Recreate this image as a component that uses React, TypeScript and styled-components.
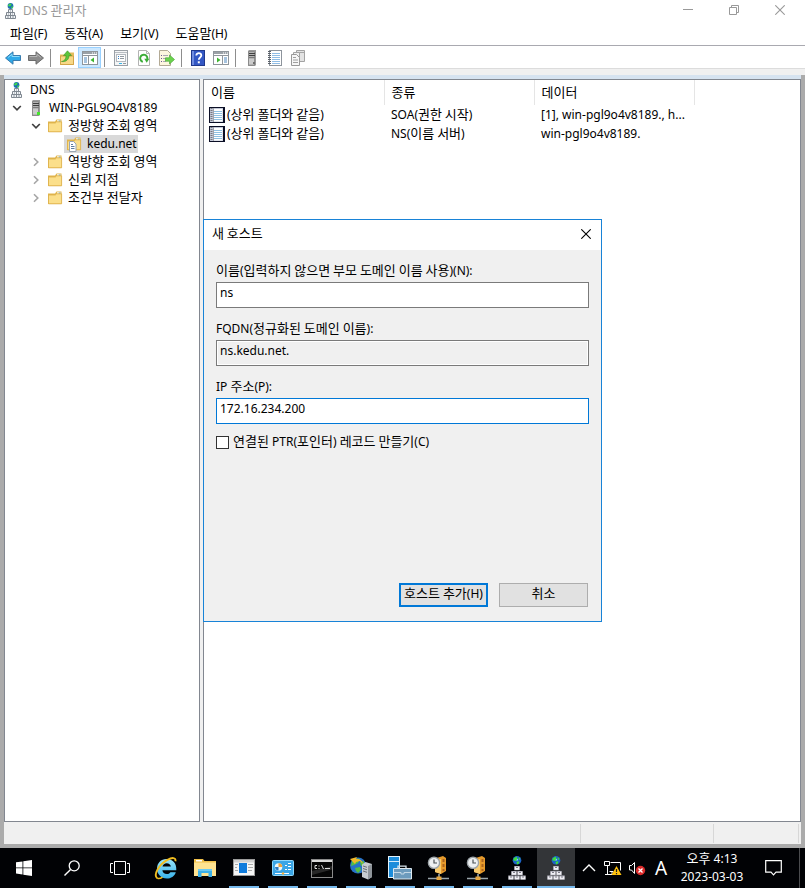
import React, { useState } from "react";
import styled, { createGlobalStyle, css } from "styled-components";

const GlobalStyle = createGlobalStyle`
  *, *::before, *::after { box-sizing: border-box; }
  body { margin: 0; background: #ababab; }
  body, button, input, table {
    font-family: "Noto Sans", "Noto Sans CJK KR", sans-serif;
    font-size: 12px;
    line-height: 18px;
    color: #000;
  }
  svg { display: block; flex: none; }
`;

/* ---------- text ---------- */

const Hangul = styled.span`
  font-family: "Noto Sans CJK KR", sans-serif;
  font-size: 13px;
  line-height: 1;
`;

const KOREAN_RUN = /([\uac00-\ud7a3]+(?: +[\uac00-\ud7a3]+)*)/;

function Text({ children }: { children: string }) {
  return (
    <>
      {children.split(KOREAN_RUN).map((part, i) =>
        i % 2 ? <Hangul key={i}>{part}</Hangul> : part
      )}
    </>
  );
}

/* ---------- icons ---------- */

const DnsIcon = () => (
  <svg width="12" height="16" viewBox="0 0 12 16">
    <circle cx="5.500" cy="3" r="2.900" fill="#1c6fb4" />
    <path d="M3.500 1.600 5.800.4l.8 1.400L5 3.400 3 3ZM6.300 3.800l2-.6-.7 2-1.300.4Z" fill="#3fd64a" />
    <path d="M3.500 6.500h4v3h-4ZM1.500 9.500h4v3h-4ZM5.500 9.500h4v3h-4ZM.5 12.500h5v3h-5ZM5.500 12.500h5v3h-5Z" fill="#f1f4f7" stroke="#808891" />
    <path d="M5 8h1M3 11h1M7 11h1M2 14h2M7 14h2" stroke="#8d959e" />
  </svg>
);

const DnsTaskIcon = () => {
  const blocks = [[6, 10], [3, 15], [9, 15], [0, 19.5], [6, 19.5], [12, 19.5]];
  return (
    <svg width="18" height="24" viewBox="0 0 18 24">
      <circle cx="9" cy="4.300" r="4.300" fill="#1b63c8" />
      <path d="M5.500 2.500 8.500.4l1 2L8 5 5.500 4.500ZM10.500 1.200l2 1.600-1.500 1.500ZM8.500 5.800l2.800-.6-.3 2.300-2 .9Z" fill="#3edc3c" />
      <path d="M9 2.500 10.500 4 8.500 5Z" fill="#8be3ff" />
      {blocks.map(([x, y]) => (
        <g key={`${x}-${y}`}>
          <rect x={x + 0.3} y={y} width="5.400" height="4.200" fill="#b9b9c4" />
          <rect x={x + 0.8} y={y + 1} width="4.400" height="2.700" fill="#f0f0f5" />
          <rect x={x + 2} y={y + 1} width="2" height="1" fill="#7d7d88" />
        </g>
      ))}
    </svg>
  );
};

const ServerIcon = ({ led = true }: { led?: boolean }) => (
  <svg width="16" height="16" viewBox="0 0 16 16">
    <path d="M5 0h7v15l-1 1H4V1Z" fill="#9a9a9a" />
    <path d="M4.500 1.500h6v14h-6Z" fill="#b4b4b4" stroke="#8b8b8b" />
    <path d="M5 3.500h6M5 5.500h6" stroke="#3f3f3f" />
    <path d="M5 7.500h6" stroke="#7a7a7a" />
    <path d="M5 9h5v5H5Z" fill="#cbcbcb" />
    {led ? (
      <rect x="9" y="12" width="3" height="3" fill="#45e52c" />
    ) : (
      <rect x="9" y="12" width="2" height="2" fill="#6f6f6f" />
    )}
  </svg>
);

const FolderIcon = ({ sheet = false }: { sheet?: boolean }) => (
  <svg width="16" height="16" viewBox="0 0 16 16">
    <path d="M1 3.500h7l1.500-2h5v12.500H1Z" fill="#e2b64c" />
    <path d="M10 2.300h3.600v1.500H10Z" fill="#fff" />
    <path d="M11.800 2.600h1.600v1h-1.600Z" fill="#3c9bd6" />
    <path d="M1.500 5h6.800l1.300-1.200h5v10H1.500Z" fill="#fbdf8b" stroke="#dcae49" strokeWidth=".8" />
    {sheet && (
      <>
        <path d="M3.500 5.500h4l2.500 2.500v7.500H3.500Z" fill="#fff" stroke="#9aa6b3" />
        <path d="M5 8.500h2M5 10.500h3.500M5 12.500h3.500" stroke="#5f7c9f" />
      </>
    )}
  </svg>
);

const ArrowIcon = ({ forward = false }: { forward?: boolean }) => (
  <svg width="18" height="16" viewBox="0 0 18 16">
    {forward ? (
      <>
        <path d="M1.500 5.500H9V1.800L16.500 8 9 14.200v-3.700H1.500Z" fill="#8b8b8b" stroke="#6b6b6b" />
        <path d="M2.500 6.500H10V4.200L13.800 7.400" fill="none" stroke="#b5b5b5" />
      </>
    ) : (
      <>
        <path d="M16.500 5.500H9V1.800L1.500 8 9 14.200v-3.700h7.500Z" fill="#2fa9e8" stroke="#3a7cae" />
        <path d="M15.500 6.500H8V4.200L4.200 7.400" fill="none" stroke="#8edbfa" />
      </>
    )}
  </svg>
);

const FolderUpIcon = () => (
  <svg width="16" height="16" viewBox="0 0 16 16">
    <path d="M1 4.500h8l1.500-2h4.500v12.500H1Z" fill="#e5bd5d" />
    <path d="M1.500 6h13v8.500h-13Z" fill="#f7d887" stroke="#d3a447" />
    <path d="M2.500 11.500C6 10.800 7 8.500 7 5.500H4.500L8.500.8l4 4.700H10c0 4-2.800 6.600-7.500 6Z" fill="#5cc53b" stroke="#3b9427" strokeWidth=".6" />
  </svg>
);

const PaneIcon = ({ right = false }: { right?: boolean }) => (
  <svg width="16" height="16" viewBox="0 0 16 16">
    <rect x=".5" y="1.500" width="15" height="13" fill="#fff" stroke="#8f959b" />
    <path d="M1 2h14v2H1Z" fill="#9ba1a7" />
    <path d="M10 3h1M12 3h1M14 3h1" stroke="#fff" />
    <path d="M1 5.500h14" stroke="#8f959b" />
    {right ? (
      <>
        <path d="M9.500 6v8.500" stroke="#8f959b" />
        <path d="M4 7.500v5L7.500 10Z" fill="#3db52f" />
        <path d="M11 8h3M11 10h3M11 12h3" stroke="#4d86bd" />
      </>
    ) : (
      <>
        <path d="M6.500 6v8.500" stroke="#8f959b" />
        <path d="M12 7.500v5L8.500 10Z" fill="#3db52f" />
        <path d="M2 8h3M2 10h3M2 12h3" stroke="#4d86bd" />
      </>
    )}
  </svg>
);

const PropertiesIcon = () => (
  <svg width="16" height="16" viewBox="0 0 16 16">
    <rect x="1.500" y=".5" width="13" height="15" fill="#f5f6f7" stroke="#9aa0a6" />
    <path d="M2 2.500h12" stroke="#b8bdc2" />
    <rect x="3.500" y="4.500" width="9" height="7" fill="#fff" stroke="#b3b9bf" />
    <path d="M5 6.500h1M5 8.500h1" stroke="#2f7cc4" />
    <path d="M7 6.500h4M7 8.500h4" stroke="#9098a0" />
    <path d="M6 13.500h3" stroke="#35b3e6" />
    <path d="M10 13.500h3" stroke="#9098a0" />
  </svg>
);

const RefreshIcon = () => (
  <svg width="16" height="16" viewBox="0 0 16 16">
    <path d="M2.500.5h8L13.500 3.500v12h-11Z" fill="#fff" stroke="#b3b3b3" />
    <path d="M10.500.5v3h3" fill="none" stroke="#b3b3b3" />
    <path d="M6.800 11.800A3.600 3.600 0 1 1 11.200 9.500" fill="none" stroke="#3cad38" strokeWidth="1.900" />
    <path d="M8.300 8.800h5l-2.600 3.900Z" fill="#3cad38" />
  </svg>
);

const ExportIcon = () => (
  <svg width="16" height="16" viewBox="0 0 16 16">
    <path d="M.5.5h8L11.500 3.500v12H.5Z" fill="#fdf6df" stroke="#b3aa95" />
    <path d="M2 5.500h1M2 8.500h1M2 11.500h1" stroke="#6a5c93" />
    <path d="M4 5.500h5M4 8.500h3M4 11.500h3" stroke="#aaa6b3" />
    <path d="M6.500 7.800h4V5l5 4.500-5 4.500v-2.800h-4Z" fill="#6bd34d" stroke="#4faa3d" strokeWidth=".7" />
  </svg>
);

const HelpIcon = () => (
  <svg width="16" height="16" viewBox="0 0 16 16">
    <rect x="1.500" y=".5" width="13" height="15" fill="#3357c4" stroke="#20388c" />
    <path d="M2 1h2v14H2Z" fill="#6f8ce0" />
    <path d="M6.300 5.500c0-3.200 5.200-3 5 0 0 2-2.500 2-2.500 4.200" fill="none" stroke="#fff" strokeWidth="1.800" />
    <rect x="7.800" y="11.300" width="2" height="2" fill="#fff" />
  </svg>
);

const NotebookIcon = () => (
  <svg width="16" height="16" viewBox="0 0 16 16">
    <rect x="2.500" y=".5" width="12" height="15" fill="#fff" stroke="#8d949c" />
    <path d="M5 3.500h8M5 5.500h8M5 7.500h8M5 9.500h8M5 11.500h8M5 13.500h8" stroke="#8fbde6" />
    <path d="M2.500 1v14" stroke="#5a6068" strokeWidth="3" strokeDasharray="1 1" />
  </svg>
);

const RecordIcon = () => (
  <svg width="16" height="16" viewBox="0 0 16 16">
    <rect width="16" height="16" fill="#0b0f26" />
    <path d="M1 1h13v14H1Z" fill="#c3c9d8" />
    <path d="M5 2h8.500v12.500H5Z" fill="#fff" />
    <path d="M5 4.500h8M5 6.500h8M5 8.500h8M5 10.500h8M5 12.500h8" stroke="#8fc0e2" />
    <path d="M2.500 1v14" stroke="#77767c" strokeWidth="2" strokeDasharray="1 1" />
    <path d="M4.500 1v14" stroke="#a2a4ad" />
  </svg>
);

const CopiesIcon = () => (
  <svg width="16" height="16" viewBox="0 0 16 16">
    <path d="M6.500.5h8v11h-8Z" fill="#e3e3e3" stroke="#a3a3a3" />
    <path d="M7 2.500h7" stroke="#a5a5a5" />
    <path d="M3.500 2.500h6v10h-6Z" fill="#f0f0f0" stroke="#a3a3a3" />
    <path d="M1.500 4.500h5l3 3v8h-8Z" fill="#f7f7f7" stroke="#999" />
    <path d="M3 7.500h3M3 10h5M3 12.500h5" stroke="#a0a0a0" />
  </svg>
);

const ChevronIcon = ({ open }: { open: boolean }) => (
  <svg width="10" height="10" viewBox="0 0 10 10">
    {open ? (
      <path d="m1.200 3 3.800 3.800L8.800 3" fill="none" stroke="#404040" strokeWidth="1.700" />
    ) : (
      <path d="m3 1.200 3.800 3.800L3 8.800" fill="none" stroke="#a6a6a6" strokeWidth="1.600" />
    )}
  </svg>
);

const MinimizeIcon = () => (
  <svg width="10" height="10" viewBox="0 0 10 10"><path d="M0 4.500h10" stroke="#999" /></svg>
);
const RestoreIcon = () => (
  <svg width="10" height="10" viewBox="0 0 10 10">
    <path d="M.5 2.500h7v7h-7ZM2.500 2.500v-2h7v7h-2" fill="none" stroke="#999" />
  </svg>
);
const CloseIcon = ({ color = "#999" }: { color?: string }) => (
  <svg width="10" height="10" viewBox="0 0 10 10">
    <path d="m.3.3 9.400 9.400m0-9.400L.3 9.700" stroke={color} strokeWidth="1.100" />
  </svg>
);

/* taskbar icons */

const StartIcon = () => (
  <svg width="16" height="16" viewBox="0 0 16 16">
    <path d="M0 2.300 6.500 1.400v6.100H0ZM7.300 1.300 16 0v7.500H7.300ZM0 8.300h6.500v6.200L0 13.600ZM7.300 8.300H16V16l-8.700-1.300Z" fill="#fff" />
  </svg>
);
const SearchIcon = () => (
  <svg width="16" height="16" viewBox="0 0 16 16">
    <circle cx="10.200" cy="5.800" r="5" fill="none" stroke="#fff" strokeWidth="1.300" />
    <path d="M6.600 9.400.5 15.500" stroke="#fff" strokeWidth="1.400" />
  </svg>
);
const TaskViewIcon = () => (
  <svg width="20" height="14" viewBox="0 0 20 14">
    <path d="M4.500.5h11v13h-11ZM3 2.500H.5v9H3M17 2.500h2.500v9H17" fill="none" stroke="#fff" />
  </svg>
);
const ExplorerEIcon = () => (
  <svg width="24" height="24" viewBox="0 0 24 24">
    <defs>
      <linearGradient id="ieBlue" x1="0" y1="0" x2="0" y2="1">
        <stop offset="0" stopColor="#9be6fb" />
        <stop offset="1" stopColor="#38b2ea" />
      </linearGradient>
    </defs>
    <path d="M12.500 3C7 3 3 7.200 3 12.600 3 18.200 7 22.500 12.700 22.500c4.300 0 7.800-2.300 9.100-6.300h-5.400c-.8 1.300-2 1.800-3.500 1.800-2.600 0-4.300-1.400-4.500-3.800H22.300C22.800 7.300 18.600 3 12.500 3ZM8.500 10.600C8.900 8.600 10.500 7.200 12.700 7.200s3.900 1.300 4.200 3.400Z" fill="url(#ieBlue)" />
    <path d="M3.300 22.200C-1.200 19 5.300 8.200 13 4.100c5-2.800 9.200-3 8.400 1.200" fill="none" stroke="#f1bd20" strokeWidth="1.900" />
    <path d="M3.300 22.200c1.300.8 3.400.2 5.200-1" fill="none" stroke="#f1bd20" strokeWidth="1.500" />
  </svg>
);
const FilesIcon = () => (
  <svg width="22" height="20" viewBox="0 0 22 20">
    <path d="M0 1h9l1.500 2H22v15H0Z" fill="#f0c04a" />
    <path d="M2 2h6v1.500H2Z" fill="#fff" />
    <path d="M0 4.500h22V18H0Z" fill="#ffe391" />
    <path d="M4 19v-8h14v8h-3.500v-4h-7v4Z" fill="#3bb0e8" />
    <path d="M4 11h14v2H4Z" fill="#6ccaf2" />
  </svg>
);
const RunWindowIcon = () => (
  <svg width="22" height="18" viewBox="0 0 22 18">
    <rect x=".5" y=".5" width="21" height="16" fill="#f5f5f5" stroke="#9c9c9c" />
    <path d="M1 1h20v2.500H1Z" fill="#d1d1d1" />
    <path d="M2 5.500h3M2 8.500h2M2 11.500h3M15 5.500h5M15 8.500h5M15 11.500h4" stroke="#a9a9a9" />
    <rect x="6" y="4" width="8" height="10" fill="#0f7bdc" />
  </svg>
);
const ControlPanelIcon = () => (
  <svg width="22" height="18" viewBox="0 0 22 18">
    <rect x=".5" y="1.500" width="21" height="15" rx="1" fill="#3aa5e6" stroke="#8ed7fb" />
    <circle cx="6.500" cy="8" r="3.800" fill="#e8f8ff" />
    <path d="M6.500 8V4.200A3.800 3.800 0 0 1 10.300 8Z" fill="#f3a339" />
    <path d="M3 8h3.500v3.500A3.800 3.800 0 0 1 3 8Z" fill="#2b79c0" />
    <path d="M13 6.500h2M13 10.500h2M16 4.500h3M16 7.500h3M16 10.500h3M3 14.500h14" fill="none" stroke="#fff" />
    <circle cx="11" cy="14.500" r="1.200" fill="#f4b23f" />
  </svg>
);
const ConsoleIcon = () => (
  <svg width="22" height="19" viewBox="0 0 22 19">
    <rect x=".5" y=".5" width="21" height="18" fill="#050505" stroke="#8a8a8a" />
    <path d="M1 1h20v2H1Z" fill="#d9d9d9" />
    <path d="M1 12 21 7v3.500L1 16Z" fill="#272727" />
    <path d="M6 6.500H4v3h2M8 6.500v1M8 9v1M10.500 6l2 4M14 9.500h5" fill="none" stroke="#ddd" />
  </svg>
);
const IisIcon = () => (
  <svg width="24" height="24" viewBox="0 0 24 24">
    <circle cx="9" cy="9.500" r="8" fill="#2672c9" />
    <path d="M3 5c3-3 6-3 8-2L9 7 5 9l-3 1ZM6 12l5-1 1 3-3 3-2-2ZM11 6l4-1v4l-3 1Z" fill="#52bd45" />
    <path d="M1 3 8 1l-1 2c4 0 6 1 7 5l-3-3-4 1-1 2-5-5Z" fill="#f2b82a" />
    <path d="M13 8.500 16.500 6 23 8v13l-4 2.500-6-2.500Z" fill="#c7ccd0" />
    <path d="m19 10 4-2v13l-4 2.500Z" fill="#8f959b" />
    <path d="m14 10 4 1.300M14 12.500l4 1.300M14 15l4 1.300" stroke="#696f75" />
  </svg>
);
const ServerManagerIcon = () => (
  <svg width="24" height="24" viewBox="0 0 24 24">
    <rect x=".5" y=".5" width="11" height="21" fill="#1c8ddb" stroke="#e3f2fb" />
    <path d="M1 5.500h10" stroke="#d6ecf9" />
    <path d="M10 12.500v-2.300h8v2.300" fill="none" stroke="#d8e4ec" strokeWidth="1.300" />
    <path d="M5.500 12.500h18v10.500h-18Z" fill="#6c9bbd" stroke="#dce8f0" />
    <path d="M6 16.500h7v1.500h3v-1.500h7" fill="none" stroke="#c3d8e6" />
  </svg>
);
const TimeServerIcon = () => (
  <svg width="24" height="24" viewBox="0 0 24 24">
    <path d="M8 2.500 16 0l3 2v13l-5 3-6-2Z" fill="#e59a2c" />
    <path d="m8 4 6-1v15l-6-2Z" fill="#f9ca6c" />
    <path d="M16.500 3v3M16.500 8v3M16.500 13v2" stroke="#a9631e" strokeWidth="2" />
    <path d="M12 18v4M1 22.500h21" stroke="#9aa5ab" strokeWidth="1.600" />
    <rect x="9.500" y="20.500" width="5" height="3.500" fill="#e5a53f" />
    <circle cx="7" cy="6.800" r="5.600" fill="#edf0f2" stroke="#9ca3a8" strokeWidth="1.400" />
    <path d="M7 3.500V7h3" fill="none" stroke="#4d5357" strokeWidth="1.200" />
  </svg>
);
const UpIcon = () => (
  <svg width="14" height="10" viewBox="0 0 14 10"><path d="m1 8 6-6 6 6" fill="none" stroke="#fff" strokeWidth="1.400" /></svg>
);
const NetworkIcon = () => (
  <svg width="18" height="16" viewBox="0 0 18 16">
    <path d="M6.500 2.500h10v8M5.500 11.500h4M.5 1.500h5v4h-5ZM3.500 5.500v9M1 14.500h7M8 11.500v3" fill="none" stroke="#fff" />
    <path d="m12.500 6 5 9h-10Z" fill="#ffc20e" />
    <path d="M12.500 9v3M12.500 13v1.200" stroke="#222" strokeWidth="1.200" />
  </svg>
);
const VolumeIcon = () => (
  <svg width="18" height="16" viewBox="0 0 18 16">
    <path d="M1.500 5.500h2l3-3v11l-3-3.500h-2Z" fill="none" stroke="#fff" />
    <circle cx="12.500" cy="10.500" r="4.700" fill="#dc2b2b" />
    <path d="m10.500 8.500 4 4m0-4-4 4" stroke="#fff" strokeWidth="1.300" />
  </svg>
);
const NoticeIcon = () => (
  <svg width="17" height="16" viewBox="0 0 17 16">
    <path d="M.7.7h15.600v11.500H11L8.500 14.800 6 12.200H.7Z" fill="none" stroke="#fff" strokeWidth="1.200" />
  </svg>
);

/* ---------- page ---------- */

const Desktop = styled.div`
  min-height: 100vh;
  display: flex;
  flex-direction: column;
`;

const AppWindow = styled.main`
  position: relative;
  flex: 1;
  display: flex;
  flex-direction: column;
`;

const TitleBar = styled.header`
  display: flex;
  align-items: center;
  height: 22px;
  padding-left: 5px;
  gap: 6px;
  background: #fff;
`;

const WindowTitle = styled.h1`
  flex: 1;
  margin: 0;
  font-size: 12px;
  font-weight: 400;
  line-height: 18px;
  color: #999;
`;

const CaptionButton = styled.button`
  display: flex;
  align-items: center;
  justify-content: center;
  width: 46px;
  height: 20px;
  padding: 0;
  border: 0;
  background: transparent;
`;

const CaptionButtons = styled.div`
  display: flex;
  align-self: flex-start;
  padding-right: 2px;
`;

const MenuBar = styled.nav`
  display: flex;
  gap: 1px;
  height: 24px;
  padding-left: 2px;
  background: #fff;
  border-bottom: 1px solid #a9a9b0;
`;

const MenuItem = styled.button`
  padding: 0 8px;
  border: 0;
  background: transparent;
`;

const ToolBar = styled.div`
  display: flex;
  align-items: flex-end;
  height: 23px;
  padding-left: 1px;
  background: #fff;
  border-bottom: 1px solid #dcdcdc;
`;

const ToolButton = styled.button<{ $active?: boolean }>`
  display: flex;
  align-items: center;
  justify-content: center;
  width: 23px;
  height: 21px;
  padding: 0;
  border: 1px solid ${(p) => (p.$active ? "#99d1ff" : "transparent")};
  background: ${(p) => (p.$active ? "#cce8ff" : "transparent")};
`;

const ToolDivider = styled.span`
  width: 1px;
  height: 18px;
  margin: 0 4px 1px 3px;
  background: #8d8d8d;
`;

const Frame = styled.div`
  flex: 1;
  display: flex;
  flex-direction: column;
  margin: 0 4px;
  background: #f0f0f0;
`;

const Shelf = styled.div`
  height: 6px;
  background: #f0f0f0;
`;

const Workspace = styled.div`
  flex: 1;
  display: flex;
  gap: 3px;
  border-top: 4px solid #d6e3f0;
`;

const panel = css`
  background: #fff;
  border: 1px solid #828790;
`;

const TreePanel = styled.ul`
  ${panel}
  flex: none;
  width: 196px;
  margin: 0;
  padding: 1px 2px;
  list-style: none;
`;

const TreeRow = styled.li<{ $level: number }>`
  display: flex;
  align-items: center;
  height: 18px;
  padding-left: ${(p) => p.$level * 19}px;
`;

const TreeSlot = styled.span`
  display: flex;
  align-items: center;
  justify-content: center;
  flex: none;
  width: 19px;
`;

const TreeItem = styled.span<{ $selected?: boolean }>`
  display: flex;
  align-items: center;
  height: 18px;
  padding-right: 1px;
  white-space: nowrap;
  background: ${(p) => (p.$selected ? "#d9d9d9" : "transparent")};
`;

const TreeLabel = styled.span`
  padding-left: 4px;
`;

const ListPanel = styled.section`
  ${panel}
  flex: 1;
  min-width: 0;
  overflow: hidden;
`;

const RecordTable = styled.table`
  width: 100%;
  table-layout: fixed;
  border-collapse: collapse;
  white-space: nowrap;
`;

const HeadCell = styled.th<{ $width?: number }>`
  width: ${(p) => (p.$width ? `${p.$width}px` : "auto")};
  height: 25px;
  padding: 0 7px;
  font-weight: 400;
  text-align: left;
  border-right: ${(p) => (p.$width ? "1px solid #e5e5e5" : "0")};
`;

const Cell = styled.td`
  height: 19px;
  padding: 0 7px;
`;

const NameCell = styled.td`
  height: 19px;
  padding: 0 5px;
`;

const RecordName = styled.span`
  display: flex;
  align-items: center;
  gap: 2px;
`;

const StatusBar = styled.footer`
  display: flex;
  height: 22px;
  margin-right: 2px;
  padding: 2px 0 1px;
`;

const StatusCell = styled.span<{ $width?: number }>`
  flex: ${(p) => (p.$width ? `0 0 ${p.$width}px` : "1")};
  border-right: 1px solid #d7d7d7;
`;

const WindowEdge = styled.div`
  height: 4px;
`;

/* ---------- dialog ---------- */

const Dialog = styled.form`
  position: absolute;
  left: 203px;
  top: 219px;
  width: 399px;
  background: #f0f0f0;
  border: 1px solid #1883d7;
`;

const DialogTitle = styled.div`
  display: flex;
  align-items: center;
  justify-content: space-between;
  height: 30px;
  padding: 0 0 2px 8px;
  background: #fff;
`;

const DialogClose = styled.button`
  display: flex;
  align-items: center;
  justify-content: center;
  width: 30px;
  height: 28px;
  padding: 0;
  border: 0;
  background: transparent;
`;

const DialogBody = styled.div`
  padding: 10px 12px 14px;
`;

const Field = styled.div`
  display: flex;
  flex-direction: column;
  margin-bottom: 10px;
`;

const FieldLabel = styled.label`
  height: 22px;
  line-height: 22px;
`;

const FieldInput = styled.input`
  width: 100%;
  height: 26px;
  padding: 0 3px 6px;
  border: 1px solid #7a7a7a;
  border-radius: 0;
  background: #fff;
  outline: 0;

  &:read-only {
    background: #f0f0f0;
    box-shadow: inset 0 0 0 1px #fff;
  }
  &[name="ip"] {
    border-color: #0078d7;
  }
`;

const CheckRow = styled.div`
  display: flex;
  align-items: center;
  gap: 4px;
  height: 16px;
`;

const CheckBox = styled.input`
  appearance: none;
  width: 13px;
  height: 13px;
  margin: 0;
  border: 1px solid #333;
  background: #fff;

  &:checked {
    box-shadow: inset 0 0 0 2px #fff;
    background: #333;
  }
`;

const DialogActions = styled.div`
  display: flex;
  justify-content: flex-end;
  gap: 11px;
  margin-top: 133px;
  padding-right: 1px;
`;

const DialogButton = styled.button<{ $primary?: boolean }>`
  width: 89px;
  height: 24px;
  padding: 0 0 2px;
  white-space: nowrap;
  line-height: 18px;
  background: #e1e1e1;
  border: ${(p) => (p.$primary ? "2px solid #0078d7" : "1px solid #adadad")};
`;

/* ---------- taskbar ---------- */

const TaskBar = styled.nav`
  display: flex;
  height: 40px;
  padding-right: 5px;
  background: #010205;
  color: #fff;
`;

const TaskButton = styled.button<{ $width: number; $running?: boolean; $active?: boolean }>`
  display: flex;
  align-items: center;
  justify-content: center;
  flex: none;
  position: relative;
  width: ${(p) => p.$width}px;
  height: 40px;
  padding: 0;
  border: 0;
  color: #fff;
  background: ${(p) => (p.$active ? "#333538" : "transparent")};

  &::after {
    content: "";
    display: ${(p) => (p.$running ? "block" : "none")};
    position: absolute;
    left: ${(p) => (p.$active ? 0 : 4)}px;
    right: ${(p) => (p.$active ? 0 : 4)}px;
    bottom: 0;
    height: 2px;
    background: #76b9ed;
  }
`;

const TaskApps = styled.div`
  display: flex;
  flex: 1;
  gap: 1px;
  padding-left: 3px;
`;

const Tray = styled.div`
  display: flex;
  align-items: center;
`;

const InputMode = styled.span`
  font-size: 19px;
  line-height: 40px;
`;

const Clock = styled.time`
  width: 78px;
  text-align: center;
  line-height: 18px;
`;

const ClockLine = styled.span`
  display: block;
`;

const TrayDesktop = styled.button`
  width: 5px;
  height: 40px;
  padding: 0;
  border: 0;
  border-right: 1px solid #4a4b4e;
  background: transparent;
`;

/* ---------- data ---------- */

const menus = ["파일(F)", "동작(A)", "보기(V)", "도움말(H)"];

type Tool = { label: string; icon: React.ReactNode; active?: boolean };
const toolGroups: Tool[][] = [
  [
    { label: "뒤로", icon: <ArrowIcon /> },
    { label: "앞으로", icon: <ArrowIcon forward /> },
  ],
  [
    { label: "한 수준 위로", icon: <FolderUpIcon /> },
    { label: "콘솔 트리 표시", icon: <PaneIcon />, active: true },
  ],
  [
    { label: "속성", icon: <PropertiesIcon /> },
    { label: "새로 고침", icon: <RefreshIcon /> },
    { label: "목록 내보내기", icon: <ExportIcon /> },
  ],
  [
    { label: "도움말", icon: <HelpIcon /> },
    { label: "작업 창 표시", icon: <PaneIcon right /> },
  ],
  [
    { label: "서버", icon: <ServerIcon led={false} /> },
    { label: "레코드", icon: <NotebookIcon /> },
    { label: "복사", icon: <CopiesIcon /> },
  ],
];

type Node = { label: string; level: number; icon: React.ReactNode; open?: boolean; selected?: boolean };
const tree: Node[] = [
  { label: "DNS", level: 0, icon: <DnsIcon /> },
  { label: "WIN-PGL9O4V8189", level: 0, icon: <ServerIcon />, open: true },
  { label: "정방향 조회 영역", level: 1, icon: <FolderIcon />, open: true },
  { label: "kedu.net", level: 3, icon: <FolderIcon sheet />, selected: true },
  { label: "역방향 조회 영역", level: 1, icon: <FolderIcon />, open: false },
  { label: "신뢰 지점", level: 1, icon: <FolderIcon />, open: false },
  { label: "조건부 전달자", level: 1, icon: <FolderIcon />, open: false },
];

const records = [
  { name: "(상위 폴더와 같음)", type: "SOA(권한 시작)", data: "[1], win-pgl9o4v8189., h..." },
  { name: "(상위 폴더와 같음)", type: "NS(이름 서버)", data: "win-pgl9o4v8189." },
];

type Task = { label: string; icon: React.ReactNode; running?: boolean; active?: boolean };
const tasks: Task[] = [
  { label: "Internet Explorer", icon: <ExplorerEIcon /> },
  { label: "파일 탐색기", icon: <FilesIcon /> },
  { label: "실행", icon: <RunWindowIcon />, running: true },
  { label: "제어판", icon: <ControlPanelIcon />, running: true },
  { label: "명령 프롬프트", icon: <ConsoleIcon />, running: true },
  { label: "IIS 관리자", icon: <IisIcon />, running: true },
  { label: "서버 관리자", icon: <ServerManagerIcon />, running: true },
  { label: "DHCP", icon: <TimeServerIcon />, running: true },
  { label: "DHCP 2", icon: <TimeServerIcon />, running: true },
  { label: "DNS", icon: <DnsTaskIcon />, running: true },
  { label: "DNS 관리자", icon: <DnsTaskIcon />, running: true, active: true },
];

function NewHostDialog() {
  const [name, setName] = useState("ns");
  const [ip, setIp] = useState("172.16.234.200");
  const [ptr, setPtr] = useState(false);
  return (
    <Dialog role="dialog" aria-labelledby="host-title" onSubmit={(e) => e.preventDefault()}>
      <DialogTitle>
        <span id="host-title"><Text>새 호스트</Text></span>
        <DialogClose type="button" aria-label="닫기"><CloseIcon color="#000" /></DialogClose>
      </DialogTitle>
      <DialogBody>
        <Field>
          <FieldLabel htmlFor="host-name"><Text>이름(입력하지 않으면 부모 도메인 이름 사용)(N):</Text></FieldLabel>
          <FieldInput id="host-name" name="host" value={name} onChange={(e) => setName(e.target.value)} />
        </Field>
        <Field>
          <FieldLabel htmlFor="host-fqdn"><Text>FQDN(정규화된 도메인 이름):</Text></FieldLabel>
          <FieldInput id="host-fqdn" name="fqdn" readOnly value={`${name}.kedu.net.`} />
        </Field>
        <Field>
          <FieldLabel htmlFor="host-ip"><Text>IP 주소(P):</Text></FieldLabel>
          <FieldInput id="host-ip" name="ip" value={ip} onChange={(e) => setIp(e.target.value)} />
        </Field>
        <CheckRow>
          <CheckBox id="host-ptr" type="checkbox" checked={ptr} onChange={(e) => setPtr(e.target.checked)} />
          <label htmlFor="host-ptr"><Text>연결된 PTR(포인터) 레코드 만들기(C)</Text></label>
        </CheckRow>
        <DialogActions>
          <DialogButton type="submit" $primary><Text>호스트 추가(H)</Text></DialogButton>
          <DialogButton type="button"><Text>취소</Text></DialogButton>
        </DialogActions>
      </DialogBody>
    </Dialog>
  );
}

export default function App() {
  return (
    <Desktop>
      <GlobalStyle />
      <AppWindow>
        <TitleBar>
          <DnsIcon />
          <WindowTitle><Text>DNS 관리자</Text></WindowTitle>
          <CaptionButtons>
            <CaptionButton aria-label="최소화"><MinimizeIcon /></CaptionButton>
            <CaptionButton aria-label="이전 크기로"><RestoreIcon /></CaptionButton>
            <CaptionButton aria-label="닫기"><CloseIcon /></CaptionButton>
          </CaptionButtons>
        </TitleBar>
        <MenuBar>
          {menus.map((m) => <MenuItem key={m}><Text>{m}</Text></MenuItem>)}
        </MenuBar>
        <ToolBar role="toolbar">
          {toolGroups.map((group, i) => (
            <React.Fragment key={i}>
              {i > 0 && <ToolDivider />}
              {group.map((t) => (
                <ToolButton key={t.label} aria-label={t.label} $active={t.active}>{t.icon}</ToolButton>
              ))}
            </React.Fragment>
          ))}
        </ToolBar>
        <Shelf />
        <Frame>
          <Workspace>
            <TreePanel role="tree">
              {tree.map((n) => (
                <TreeRow key={n.label} role="treeitem" $level={n.level} aria-expanded={n.open} aria-selected={!!n.selected}>
                  {n.open !== undefined && <TreeSlot><ChevronIcon open={n.open} /></TreeSlot>}
                  <TreeItem $selected={n.selected}>
                    <TreeSlot>{n.icon}</TreeSlot>
                    <TreeLabel><Text>{n.label}</Text></TreeLabel>
                  </TreeItem>
                </TreeRow>
              ))}
            </TreePanel>
            <ListPanel>
              <RecordTable>
                <thead>
                  <tr>
                    <HeadCell $width={180}><Text>이름</Text></HeadCell>
                    <HeadCell $width={150}><Text>종류</Text></HeadCell>
                    <HeadCell $width={160}><Text>데이터</Text></HeadCell>
                    <HeadCell aria-hidden />
                  </tr>
                </thead>
                <tbody>
                  {records.map((r) => (
                    <tr key={r.type}>
                      <NameCell>
                        <RecordName><RecordIcon /><span><Text>{r.name}</Text></span></RecordName>
                      </NameCell>
                      <Cell><Text>{r.type}</Text></Cell>
                      <Cell>{r.data}</Cell>
                      <Cell />
                    </tr>
                  ))}
                </tbody>
              </RecordTable>
            </ListPanel>
          </Workspace>
          <StatusBar>
            <StatusCell />
            <StatusCell $width={133} />
            <StatusCell $width={85} />
          </StatusBar>
        </Frame>
        <WindowEdge />
        <NewHostDialog />
      </AppWindow>
      <TaskBar>
        <TaskButton $width={48} aria-label="시작"><StartIcon /></TaskButton>
        <TaskButton $width={48} aria-label="검색"><SearchIcon /></TaskButton>
        <TaskButton $width={48} aria-label="작업 보기"><TaskViewIcon /></TaskButton>
        <TaskApps>
          {tasks.map((t) => (
            <TaskButton key={t.label} $width={38} $running={t.running} $active={t.active} aria-label={t.label}>
              {t.icon}
            </TaskButton>
          ))}
        </TaskApps>
        <Tray>
          <TaskButton $width={24} aria-label="숨겨진 아이콘 표시"><UpIcon /></TaskButton>
          <TaskButton $width={24} aria-label="네트워크"><NetworkIcon /></TaskButton>
          <TaskButton $width={24} aria-label="볼륨"><VolumeIcon /></TaskButton>
          <TaskButton $width={24} aria-label="입력 모드"><InputMode>A</InputMode></TaskButton>
          <Clock dateTime="2023-03-03T16:13">
            <ClockLine><Text>오후 4:13</Text></ClockLine>
            <ClockLine>2023-03-03</ClockLine>
          </Clock>
          <TaskButton $width={44} aria-label="알림 센터"><NoticeIcon /></TaskButton>
          <TrayDesktop aria-label="바탕 화면 보기" />
        </Tray>
      </TaskBar>
    </Desktop>
  );
}
